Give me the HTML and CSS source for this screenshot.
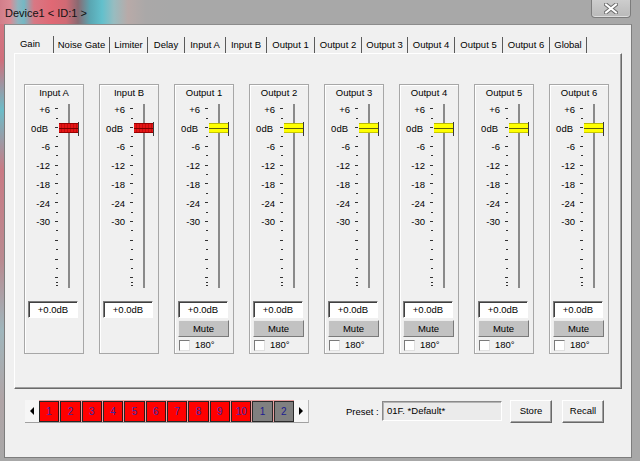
FILE: index.html
```html
<!DOCTYPE html>
<html>
<head>
<meta charset="utf-8">
<title>Device1</title>
<link rel="stylesheet" href="styles.css">
</head>
<body>
<div class="window">
  <div class="titlebar">
    <span class="title">Device1 &lt; ID:1 &gt;</span>
    <div class="close">
      <svg width="14" height="11" viewBox="0 0 14 11">
        <path d="M2 1.5 L12 9.5 M12 1.5 L2 9.5" stroke="#6a6a6a" stroke-width="4" stroke-linecap="square" fill="none"/>
        <path d="M2 1.5 L12 9.5 M12 1.5 L2 9.5" stroke="#ffffff" stroke-width="2" stroke-linecap="square" fill="none"/>
      </svg>
    </div>
  </div>
  <div class="client">
    <div class="tabs">
      <div class="tab active">Gain</div>
      <div class="tab">Noise Gate</div>
      <div class="tab">Limiter</div>
      <div class="tab">Delay</div>
      <div class="tab">Input A</div>
      <div class="tab">Input B</div>
      <div class="tab">Output 1</div>
      <div class="tab">Output 2</div>
      <div class="tab">Output 3</div>
      <div class="tab">Output 4</div>
      <div class="tab">Output 5</div>
      <div class="tab">Output 6</div>
      <div class="tab">Global</div>
    </div>
    <div class="panel">
      <div class="strip">
        <div class="strip-title">Input A</div>
        <div class="fader">
          <div class="labels"><span class="lbl">+6</span><span class="lbl odb">0dB</span><span class="lbl">-6</span><span class="lbl">-12</span><span class="lbl">-18</span><span class="lbl">-24</span><span class="lbl">-30</span></div>
          <div class="ticks"></div>
          <div class="track"></div>
          <div class="thumb red"></div>
        </div>
        <div class="value">+0.0dB</div>
      </div>
      <div class="strip">
        <div class="strip-title">Input B</div>
        <div class="fader">
          <div class="labels"><span class="lbl">+6</span><span class="lbl odb">0dB</span><span class="lbl">-6</span><span class="lbl">-12</span><span class="lbl">-18</span><span class="lbl">-24</span><span class="lbl">-30</span></div>
          <div class="ticks"></div>
          <div class="track"></div>
          <div class="thumb red"></div>
        </div>
        <div class="value">+0.0dB</div>
      </div>
      <div class="strip">
        <div class="strip-title">Output 1</div>
        <div class="fader">
          <div class="labels"><span class="lbl">+6</span><span class="lbl odb">0dB</span><span class="lbl">-6</span><span class="lbl">-12</span><span class="lbl">-18</span><span class="lbl">-24</span><span class="lbl">-30</span></div>
          <div class="ticks"></div>
          <div class="track"></div>
          <div class="thumb yellow"></div>
        </div>
        <div class="value">+0.0dB</div>
        <div class="mute">Mute</div>
        <div class="check"><span class="box"></span>180°</div>
      </div>
      <div class="strip">
        <div class="strip-title">Output 2</div>
        <div class="fader">
          <div class="labels"><span class="lbl">+6</span><span class="lbl odb">0dB</span><span class="lbl">-6</span><span class="lbl">-12</span><span class="lbl">-18</span><span class="lbl">-24</span><span class="lbl">-30</span></div>
          <div class="ticks"></div>
          <div class="track"></div>
          <div class="thumb yellow"></div>
        </div>
        <div class="value">+0.0dB</div>
        <div class="mute">Mute</div>
        <div class="check"><span class="box"></span>180°</div>
      </div>
      <div class="strip">
        <div class="strip-title">Output 3</div>
        <div class="fader">
          <div class="labels"><span class="lbl">+6</span><span class="lbl odb">0dB</span><span class="lbl">-6</span><span class="lbl">-12</span><span class="lbl">-18</span><span class="lbl">-24</span><span class="lbl">-30</span></div>
          <div class="ticks"></div>
          <div class="track"></div>
          <div class="thumb yellow"></div>
        </div>
        <div class="value">+0.0dB</div>
        <div class="mute">Mute</div>
        <div class="check"><span class="box"></span>180°</div>
      </div>
      <div class="strip">
        <div class="strip-title">Output 4</div>
        <div class="fader">
          <div class="labels"><span class="lbl">+6</span><span class="lbl odb">0dB</span><span class="lbl">-6</span><span class="lbl">-12</span><span class="lbl">-18</span><span class="lbl">-24</span><span class="lbl">-30</span></div>
          <div class="ticks"></div>
          <div class="track"></div>
          <div class="thumb yellow"></div>
        </div>
        <div class="value">+0.0dB</div>
        <div class="mute">Mute</div>
        <div class="check"><span class="box"></span>180°</div>
      </div>
      <div class="strip">
        <div class="strip-title">Output 5</div>
        <div class="fader">
          <div class="labels"><span class="lbl">+6</span><span class="lbl odb">0dB</span><span class="lbl">-6</span><span class="lbl">-12</span><span class="lbl">-18</span><span class="lbl">-24</span><span class="lbl">-30</span></div>
          <div class="ticks"></div>
          <div class="track"></div>
          <div class="thumb yellow"></div>
        </div>
        <div class="value">+0.0dB</div>
        <div class="mute">Mute</div>
        <div class="check"><span class="box"></span>180°</div>
      </div>
      <div class="strip">
        <div class="strip-title">Output 6</div>
        <div class="fader">
          <div class="labels"><span class="lbl">+6</span><span class="lbl odb">0dB</span><span class="lbl">-6</span><span class="lbl">-12</span><span class="lbl">-18</span><span class="lbl">-24</span><span class="lbl">-30</span></div>
          <div class="ticks"></div>
          <div class="track"></div>
          <div class="thumb yellow"></div>
        </div>
        <div class="value">+0.0dB</div>
        <div class="mute">Mute</div>
        <div class="check"><span class="box"></span>180°</div>
      </div>
    </div>
    <div class="bottom">
      <div class="pager">
        <div class="arrow"><span class="tri-left"></span></div>
        <div class="cells">
          <div class="cell">1</div><div class="cell">2</div><div class="cell">3</div><div class="cell">4</div><div class="cell">5</div>
          <div class="cell">6</div><div class="cell">7</div><div class="cell">8</div><div class="cell">9</div><div class="cell">10</div>
          <div class="cell grey">1</div><div class="cell grey">2</div>
        </div>
        <div class="arrow"><span class="tri-right"></span></div>
      </div>
      <div class="preset-label">Preset :</div>
      <div class="preset-field">01F. *Default*</div>
      <div class="btn store">Store</div>
      <div class="btn recall">Recall</div>
    </div>
  </div>
</div>
</body>
</html>
```

FILE: styles.css
```css
* { box-sizing: border-box; }
html, body { margin: 0; padding: 0; }
body {
  width: 640px;
  height: 461px;
  overflow: hidden;
  font-family: "Liberation Sans", Arial, sans-serif;
  font-size: 9.5px;
  color: #000;
  background: #a8a8a8;
}
.window {
  width: 640px;
  height: 461px;
  display: flex;
  flex-direction: column;
  background:
    linear-gradient(180deg, #d67a86 0, #cf6f7c 60px, #6cbcc8 110px, #c97a84 170px, #b98a90 260px, #9fb6bc 330px, #b0a4a6 400px, #a8a8a8 461px) 0 0 / 4px 100% no-repeat,
    #a8a8a8;
}
.titlebar {
  height: 24px;
  display: flex;
  align-items: flex-start;
  background: linear-gradient(90deg, #d27e8a 0, #da8a94 10px, #8fb4bf 18px, #74b8c4 24px, #d87884 34px, #e06874 52px, #d06a74 66px, #8a6a72 78px, #5aa6b2 90px, #62c0cc 102px, #98bcc0 114px, #b8aaa8 128px, #aaa8a8 146px, #a8a8a8 170px);
}
.title {
  padding-left: 5px;
  margin-top: 6px;
  font-size: 11px;
  line-height: 14px;
  color: #111;
}
.close {
  margin-left: auto;
  margin-right: 9px;
  width: 40px;
  height: 18px;
  border: 1px solid #7c7c7c;
  border-top: none;
  border-radius: 0 0 4px 4px;
  background: linear-gradient(180deg, #cdcdcd, #b9b9b9);
  box-shadow: inset 0 -1px 0 #dedede;
  display: flex;
  align-items: center;
  justify-content: center;
}
.client {
  flex: 1;
  margin: 0 8px 3px 4px;
  background: #f0f0f0;
  border: 1px solid #7d7d7d;
  border-top-color: #8c8c8c;
  padding: 10px 9px 0 9px;
}
.tabs {
  display: grid;
  grid-template-columns: 39px 56px 38px 37px 41px 41px 48px 47px 46px 47px 48px 47px 37px;
  margin-left: 1px;
  height: 18px;
  align-items: end;
}
.tab {
  height: 16px;
  line-height: 16px;
  text-align: center;
  border-right: 1px solid #5a5a5a;
  white-space: nowrap;
}
.tab.active {
  padding-right: 8px;
  height: 17px;
  line-height: 15px;
}
.panel {
  width: 608px;
  height: 336px;
  border: 1px solid;
  border-color: #ffffff #6a6a6a #6a6a6a #ffffff;
  box-shadow: inset -1px -1px 0 #a0a0a0;
  padding: 30px 0 0 9px;
  display: flex;
  gap: 15px;
}
.strip {
  width: 60px;
  height: 270px;
  border: 1px solid #a7a7a7;
  box-shadow: inset 1px 1px 0 #ffffff;
  display: flex;
  flex-direction: column;
}
.strip-title {
  margin-top: 1px;
  height: 13px;
  line-height: 13px;
  text-align: center;
  white-space: nowrap;
}
.fader {
  position: relative;
  margin-top: 5px;
  height: 186px;
  display: flex;
  align-items: flex-start;
}
.labels {
  margin-left: 3px;
  margin-top: -3.3px;
  width: 22px;
  display: flex;
  flex-direction: column;
}
.lbl {
  display: block;
  height: 18.8px;
  line-height: 18.8px;
  text-align: right;
}
.lbl.odb { padding-right: 2px; }
.ticks {
  margin-left: 5px;
  width: 3px;
  height: 182px;
  background:
    linear-gradient(#333, #333) 1px 178px / 2px 1px no-repeat,
    linear-gradient(#333, #333) 1px 181px / 2px 1px no-repeat,
    repeating-linear-gradient(180deg, transparent 0, transparent 4.2px, #333 4.2px, #333 5.2px, transparent 5.2px, transparent 18.8px) 0 0 / 3px 227px no-repeat,
    repeating-linear-gradient(180deg, transparent 0, transparent 4.2px, #333 4.2px, #333 5.2px, transparent 5.2px, transparent 9.4px) 1px 0 / 2px 178.6px no-repeat;
}
.track {
  margin-left: 10px;
  width: 2px;
  height: 184px;
  background: #8a8a8a;
}
.thumb {
  position: absolute;
  left: 34px;
  top: 19px;
  width: 20px;
  height: 10px;
}
.thumb::after {
  content: "";
  position: absolute;
  right: 0;
  top: -2px;
  width: 1px;
  height: 14px;
  background: #3a3a3a;
}
.thumb.yellow {
  background:
    linear-gradient(#5e5e10, #5e5e10) 0 4px / 19px 1px no-repeat,
    #ffff00;
  border-top: 1px solid #b8b800;
  border-bottom: 1px solid #c8c800;
}
.thumb.red {
  background:
    linear-gradient(#7a0000, #7a0000) 0 4px / 19px 1px no-repeat,
    repeating-linear-gradient(90deg, #e51515 0, #e51515 2px, #c20f0f 2px, #c20f0f 3px),
    #e51515;
  border-top: 1px solid #9a0000;
  border-bottom: 1px solid #9a0000;
}
.value {
  margin: 11px 0 0 3px;
  width: 50px;
  height: 17px;
  background: #ffffff;
  border: 1px solid;
  border-color: #7a7a7a #ffffff #ffffff #7a7a7a;
  box-shadow: inset 1px 1px 0 #404040;
  text-align: center;
  line-height: 15px;
}
.mute {
  margin: 2px 0 0 3px;
  width: 51px;
  height: 17px;
  background: #c2c2c2;
  border: 1px solid;
  border-color: #ececec #7a7a7a #7a7a7a #ececec;
  text-align: center;
  line-height: 15px;
}
.check {
  margin: 2px 0 0 4px;
  height: 12px;
  display: flex;
  align-items: center;
  line-height: 12px;
}
.box {
  width: 11px;
  height: 11px;
  margin-right: 5px;
  background: #ffffff;
  border: 1px solid;
  border-color: #7a7a7a #e0e0e0 #e0e0e0 #7a7a7a;
}
.bottom {
  display: flex;
  align-items: flex-start;
  margin-top: 11px;
  height: 23px;
}
.pager {
  margin-left: 11px;
  width: 284px;
  height: 23px;
  display: flex;
  background: #f6f6f6;
  border-bottom: 1px solid #a0a0a0;
  border-right: 1px solid #b8b8b8;
}
.arrow {
  width: 14px;
  height: 22px;
  display: flex;
  align-items: center;
  justify-content: center;
}
.tri-left {
  width: 0; height: 0;
  border-top: 4px solid transparent;
  border-bottom: 4px solid transparent;
  border-right: 4px solid #000;
}
.tri-right {
  width: 0; height: 0;
  border-top: 4px solid transparent;
  border-bottom: 4px solid transparent;
  border-left: 4px solid #000;
}
.cells {
  width: 256px;
  height: 22px;
  display: grid;
  grid-template-columns: repeat(12, 1fr);
  gap: 1px;
  padding-top: 1px;
  background: #e8a0a0;
}
.cell {
  background: #ff0000;
  border: 1px solid #262626;
  border-right-color: #3a1010;
  color: #3a2aa8;
  font-size: 10px;
  text-align: center;
  line-height: 19px;
}
.cell.grey {
  background: #808080;
  border-color: #2a2a2a;
  color: #1c1c90;
}
.preset-label {
  margin-left: 37px;
  width: 36px;
  line-height: 23px;
  white-space: nowrap;
}
.preset-field {
  margin-top: 1px;
  width: 120px;
  height: 20px;
  background: #ebebeb;
  border: 1px solid;
  border-color: #8a8a8a #ffffff #ffffff #8a8a8a;
  box-shadow: inset 1px 1px 0 #b4b4b4;
  padding-left: 4px;
  line-height: 17px;
  white-space: nowrap;
}
.btn {
  width: 42px;
  height: 23px;
  background: #f0f0f0;
  border: 1px solid;
  border-color: #ffffff #696969 #696969 #ffffff;
  box-shadow: inset -1px -1px 0 #a0a0a0;
  text-align: center;
  line-height: 20px;
}
.store { margin-left: 8px; }
.recall { margin-left: 10px; }
```
